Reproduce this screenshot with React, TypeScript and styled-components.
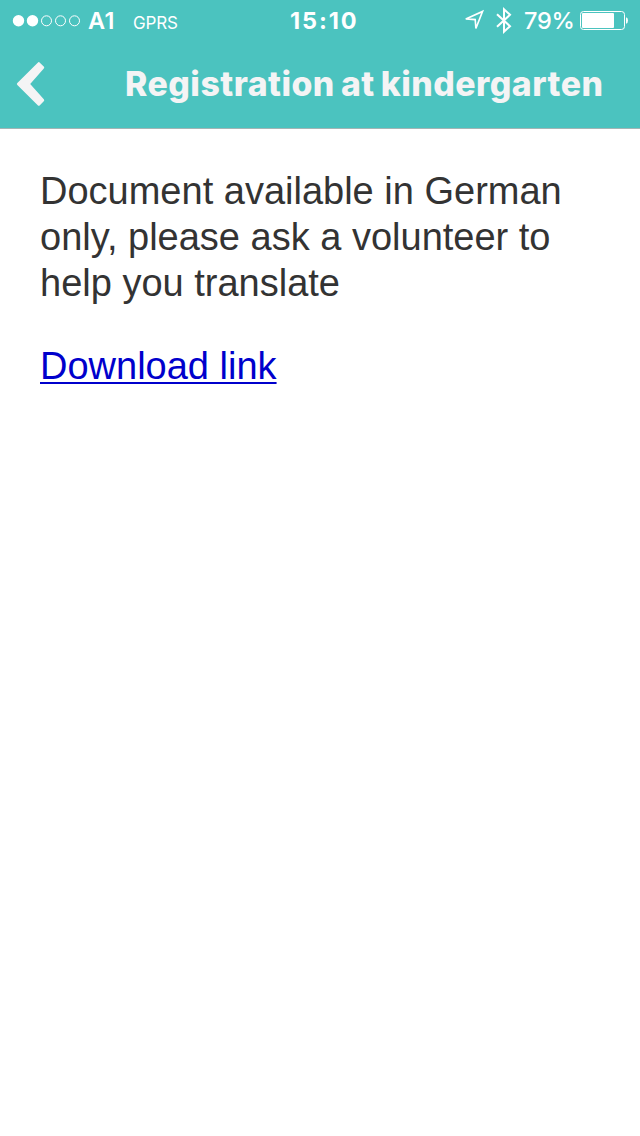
import React from 'react';
import styled, { createGlobalStyle } from 'styled-components';

const Global = createGlobalStyle`
  * { box-sizing: border-box; }
  body { margin: 0; background: #fff; }
`;
const Screen = styled.div`
  width: 640px;
  height: 1136px;
  background: #fff;
  overflow: hidden;
`;
const Header = styled.header`
  height: 129px;
  background: #4bc3bf;
  border-bottom: 1px solid #a3b5b5;
  color: #fff;
`;
const StatusBar = styled.div`
  height: 40px;
  display: grid;
  grid-template-columns: 290px 173px 1fr;
  align-items: center;
  font: 500 23.5px/42px Inter, sans-serif;
  white-space: nowrap;
`;
const StatusGroup = styled.div`
  display: flex;
  align-items: center;
  height: 40px;
`;
const Signal = styled.svg`
  margin-left: 12px;
`;
const Carrier = styled.span`
  margin-left: 8px;
  width: 45px;
  font-weight: 600;
  letter-spacing: 0.5px;
`;
const Network = styled.span`
  font-size: 17px;
  font-weight: 400;
  padding-top: 4px;
  letter-spacing: -0.2px;
`;
const Clock = styled.time`
  font-weight: 700;
  letter-spacing: 1.9px;
`;
const BatteryLevel = styled.span`
  width: 55px;
  font-weight: 550;
  letter-spacing: -0.3px;
`;
const LocationIcon = styled.svg`
  margin-right: 11px;
`;
const BluetoothIcon = styled.svg`
  margin-right: 11px;
`;
const NavBar = styled.nav`
  height: 88px;
  display: flex;
  align-items: center;
  padding-left: 16px;
`;
const BackButton = styled.button`
  width: 109px;
  height: 50px;
  padding: 0;
  border: 0;
  background: none;
  text-align: left;
`;
const Title = styled.h1`
  margin: 0;
  color: #f4f4f5;
  font: 780 33.8px/40px Inter, sans-serif;
  letter-spacing: 0.48px;
  word-spacing: -1.8px;
  white-space: nowrap;
`;
const Content = styled.main`
  padding: 39px 40px;
  color: #333;
  font: 38px/46px "Liberation Sans", Arial, sans-serif;
`;
const Message = styled.p`
  margin: 0 0 37px;
`;
const DownloadLink = styled.a`
  color: #0000cc;
  text-decoration-thickness: 2px;
  text-underline-offset: 3px;
`;

export default function App() {
  return (
    <Screen>
      <Global />
      <Header>
        <StatusBar>
          <StatusGroup>
            <Signal width="68" height="14">
              {[0, 1, 2, 3, 4].map((i) => (
                <circle key={i} cx={6.5 + i * 14} cy="6.8" r={i < 2 ? 5.7 : 5} fill={i < 2 ? '#fff' : 'none'} stroke={i < 2 ? 'none' : '#fff'} />
              ))}
            </Signal>
            <Carrier>A1</Carrier>
            <Network>GPRS</Network>
          </StatusGroup>
          <Clock>15:10</Clock>
          <StatusGroup>
            <LocationIcon width="22" height="40" viewBox="0 1 22 40" fill="none" stroke="#fff" strokeWidth="1.6">
              <path d="M2.8 18.9L19.6 11.4 12.9 28.4 12.2 19.6z" />
            </LocationIcon>
            <BluetoothIcon width="17" height="40" viewBox="0 1 17 40" fill="none" stroke="#fff" strokeWidth="2">
              <path d="M1 14.2l13 12-6 5.6V9.2l6 5.6-13 12" />
            </BluetoothIcon>
            <BatteryLevel>79%</BatteryLevel>
            <svg width="50" height="40" viewBox="0 1 50 40">
              <rect x="1.5" y="11.5" width="44" height="18" rx="3" fill="none" stroke="#fff" />
              <rect x="3" y="13" width="32" height="15" rx="1" fill="#fff" />
              <path d="M47 17.3q2 .5 2 3.2t-2 3.2z" fill="#fff" />
            </svg>
          </StatusGroup>
        </StatusBar>
        <NavBar>
          <BackButton aria-label="Back">
            <svg width="32" height="50" viewBox="0 0 32 50" fill="#f4f4f5" stroke="#f4f4f5" strokeWidth="3" strokeLinejoin="round">
              <path d="M2.4 25L22.8 4.7L26.7 8.6L12.2 25L26.7 41.2L22.8 45.1Z" />
            </svg>
          </BackButton>
          <Title>Registration at kindergarten</Title>
        </NavBar>
      </Header>
      <Content>
        <Message>Document available in German<br />only, please ask a volunteer to<br />help you translate</Message>
        <DownloadLink href="#">Download link</DownloadLink>
      </Content>
    </Screen>
  );
}
